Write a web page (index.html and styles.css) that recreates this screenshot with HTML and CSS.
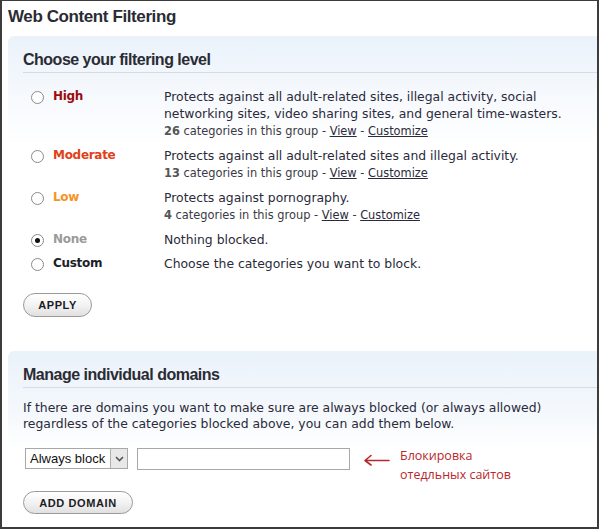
FILE: index.html
```html
<!DOCTYPE html>
<html>
<head>
<meta charset="utf-8">
<link rel="stylesheet" href="styles.css">
</head>
<body>
<div class="frame">
  <h1 class="page-title">Web Content Filtering</h1>

  <section class="panel panel-levels">
    <h2 class="panel-title">Choose your filtering level</h2>
    <div class="levels">
      <div class="level">
        <span class="radio"></span>
        <span class="level-name high">High</span>
        <div class="level-desc">
          <div class="desc-text">Protects against all adult-related sites, illegal activity, social networking sites, video sharing sites, and general time-wasters.</div>
          <div class="meta"><b>26</b> categories in this group - <a href="#">View</a> - <a href="#">Customize</a></div>
        </div>
      </div>
      <div class="level">
        <span class="radio"></span>
        <span class="level-name moderate">Moderate</span>
        <div class="level-desc">
          <div class="desc-text">Protects against all adult-related sites and illegal activity.</div>
          <div class="meta"><b>13</b> categories in this group - <a href="#">View</a> - <a href="#">Customize</a></div>
        </div>
      </div>
      <div class="level">
        <span class="radio"></span>
        <span class="level-name low">Low</span>
        <div class="level-desc">
          <div class="desc-text">Protects against pornography.</div>
          <div class="meta"><b>4</b> categories in this group - <a href="#">View</a> - <a href="#">Customize</a></div>
        </div>
      </div>
      <div class="level">
        <span class="radio checked"></span>
        <span class="level-name none">None</span>
        <div class="level-desc">
          <div class="desc-text">Nothing blocked.</div>
        </div>
      </div>
      <div class="level">
        <span class="radio"></span>
        <span class="level-name custom">Custom</span>
        <div class="level-desc">
          <div class="desc-text">Choose the categories you want to block.</div>
        </div>
      </div>
    </div>
    <button class="pill-btn apply">APPLY</button>
  </section>

  <section class="panel panel-domains">
    <h2 class="panel-title">Manage individual domains</h2>
    <p class="intro">If there are domains you want to make sure are always blocked (or always allowed) regardless of the categories blocked above, you can add them below.</p>
    <div class="domain-row">
      <div class="select">
        <span class="select-text">Always block</span>
        <span class="select-arrow">
          <svg width="9" height="6" viewBox="0 0 9 6"><path d="M1 1 L4.5 4.5 L8 1" fill="none" stroke="#555" stroke-width="1.6"/></svg>
        </span>
      </div>
      <div class="text-input"></div>
      <svg class="note-arrow" width="28" height="12" viewBox="0 0 28 12"><path d="M27 6.5 L4 6.5 M9 1.5 L3 6.5 L9 11" fill="none" stroke="#b8272d" stroke-width="1.6" stroke-linecap="round" stroke-linejoin="round"/></svg>
      <div class="note">Блокировка<br>отедльных сайтов</div>
    </div>
    <button class="pill-btn add">ADD DOMAIN</button>
  </section>
</div>
</body>
</html>
```

FILE: styles.css
```css
html, body {
  margin: 0;
  padding: 0;
  background: #fff;
}

.frame {
  width: 599px;
  height: 529px;
  box-sizing: border-box;
  border-style: solid;
  border-color: #3c3c3c;
  border-width: 1px 2px 2px 2px;
  overflow: hidden;
  font-family: "DejaVu Sans", Verdana, sans-serif;
  color: #2a2a3a;
}

.page-title {
  margin: 0;
  padding: 7px 0 0 6px;
  height: 28px;
  box-sizing: border-box;
  font-family: "Liberation Sans", Arial, sans-serif;
  font-size: 17px;
  font-weight: bold;
  letter-spacing: -0.4px;
  color: #2b2b33;
  line-height: 18px;
}

.panel {
  margin-left: 6px;
  border-radius: 6px 0 0 0;
  padding: 0 0 0 15px;
}

.panel-levels {
  margin-top: 7px;
  height: 300px;
  background: linear-gradient(#eaf2fa 0px, #f6f9fd 60px, #ffffff 110px);
}

.panel-domains {
  margin-top: 15px;
  background: linear-gradient(#eaf2fa 0px, #f4f8fc 60px, #ffffff 100px);
  padding-bottom: 20px;
}

.panel-title {
  margin: 0;
  height: 37px;
  box-sizing: border-box;
  padding-top: 15px;
  font-family: "Liberation Sans", Arial, sans-serif;
  font-size: 16px;
  font-weight: bold;
  letter-spacing: -0.5px;
  color: #2b2b33;
  line-height: 18px;
  border-bottom: 1px solid #d6dbe0;
}

.levels {
  padding-top: 15px;
  display: flex;
  flex-direction: column;
  gap: 7px;
}

.level {
  display: flex;
  align-items: flex-start;
}

.radio {
  flex: none;
  width: 11px;
  height: 11px;
  border: 1px solid #8a8a8a;
  border-radius: 50%;
  background: #fff;
  margin: 3px 0 0 8px;
  position: relative;
  box-sizing: content-box;
}

.radio.checked::after {
  content: "";
  position: absolute;
  left: 3px;
  top: 3px;
  width: 5px;
  height: 5px;
  border-radius: 50%;
  background: #111;
}

.level-name {
  flex: none;
  width: 111px;
  margin-left: 9px;
  font-size: 12px;
  font-weight: bold;
  line-height: 17px;
  letter-spacing: -0.3px;
}

.high { color: #9a0d0d; }
.moderate { color: #e0401a; }
.low { color: #f7931e; }
.none { color: #9a9a9a; }
.custom { color: #1e1e2a; }

.level-desc {
  flex: 1;
  padding-right: 14px;
}

.desc-text {
  font-size: 12.4px;
  line-height: 17px;
  color: #2a2a3a;
}

.meta {
  font-size: 11.4px;
  padding-top: 1px;
  line-height: 17px;
  color: #3a3a44;
}

.meta b {
  color: #555;
}

.meta a {
  color: #2a2a3a;
  text-decoration: underline;
}

.pill-btn {
  display: block;
  font-family: "Liberation Sans", Arial, sans-serif;
  font-size: 11px;
  font-weight: bold;
  letter-spacing: 0.6px;
  color: #1c1c24;
  background: linear-gradient(#ffffff, #f3f3f3 50%, #e0e0e0);
  border: 1px solid #9a9a9a;
  border-radius: 12px;
  padding: 0;
  height: 23px;
  cursor: pointer;
}

.apply {
  margin-top: 21px;
  width: 69px;
  height: 24px;
}

.add {
  margin-top: 7px;
  width: 110px;
}

.intro {
  margin: 12px 0 0 0;
  padding-right: 20px;
  font-size: 12.4px;
  line-height: 16px;
  color: #2a2a3a;
}

.domain-row {
  display: flex;
  align-items: flex-start;
  margin-top: 16px;
}

.select {
  margin-left: 2px;
  width: 103px;
  height: 21px;
  box-sizing: border-box;
  border: 1px solid #a8a8a8;
  display: flex;
  background: #fff;
}

.select-text {
  flex: 1;
  font-family: "Liberation Sans", Arial, sans-serif;
  font-size: 13px;
  line-height: 19px;
  padding-left: 4px;
  color: #111;
}

.select-arrow {
  width: 16px;
  border-left: 1px solid #b0b0b0;
  background: #e8e8e8;
  display: flex;
  align-items: center;
  justify-content: center;
}

.text-input {
  margin-left: 9px;
  width: 213px;
  height: 22px;
  box-sizing: border-box;
  border: 1px solid #a8a8a8;
  background: #fff;
}

.note-arrow {
  margin: 6px 0 0 12px;
}

.note {
  margin: -2px 0 0 10px;
  font-family: "Open Sans", "DejaVu Sans", sans-serif;
  font-size: 12.5px;
  line-height: 19px;
  color: #b8272d;
}
```
